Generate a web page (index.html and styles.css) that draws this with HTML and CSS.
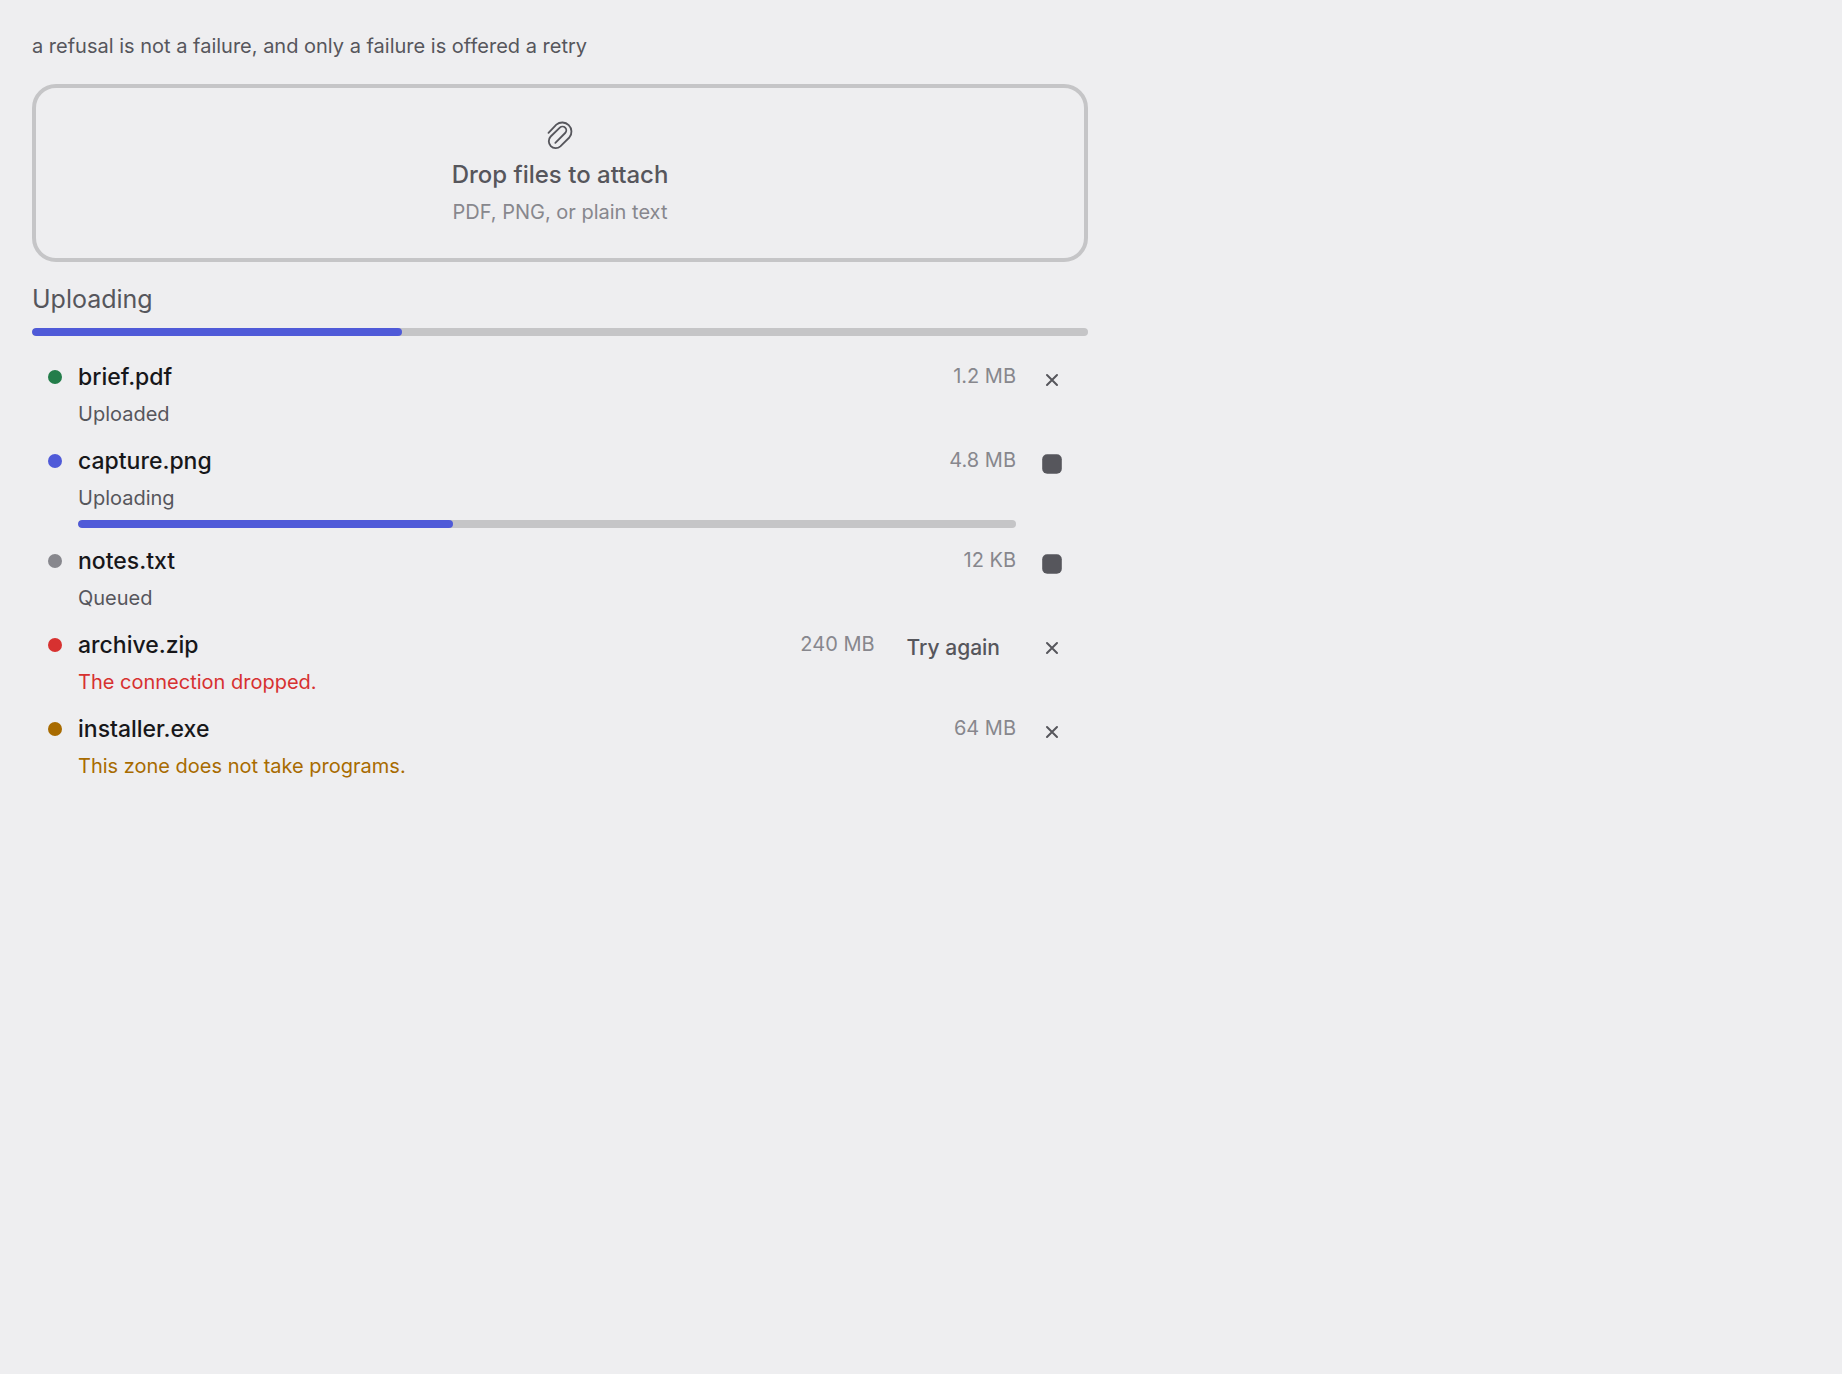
FILE: index.html
```html
<!DOCTYPE html>
<html lang="en">
<head>
<meta charset="utf-8">
<meta name="viewport" content="width=device-width, initial-scale=1">
<title>Attachments</title>
<link rel="stylesheet" href="styles.css">
</head>
<body>
<svg width="0" height="0" class="sprite" aria-hidden="true">
  <symbol id="close" viewBox="0 0 20 20"><path d="M5 5l10 10M15 5l-10 10" fill="none" stroke="currentColor" stroke-width="2" stroke-linecap="round"/></symbol>
  <symbol id="stop" viewBox="0 0 20 20"><rect x=".2" y=".2" width="19.600" height="19.600" rx="5" fill="currentColor"/></symbol>
</svg>
<main class="page">
  <p class="caption">a refusal is not a failure, and only a failure is offered a retry</p>

  <button type="button" class="dropzone">
    <svg class="clip" viewBox="45 30 90 90" aria-hidden="true"><path d="M55.500 68.500L79 44A27.500 27.500 0 0 1 118 82.500L91 109A20.700 20.700 0 0 1 62 79.500L89.500 53A11.300 11.300 0 0 1 105.500 69L76 98.500" fill="none" stroke="currentColor" stroke-width="5.500" stroke-linecap="round" stroke-linejoin="round"/></svg>
    <span class="dropzone-title">Drop files to attach</span>
    <span class="dropzone-hint">PDF, PNG, or plain text</span>
  </button>

  <section class="batch">
    <label class="batch-label" for="total">Uploading</label>
    <progress class="bar" id="total" value="35" max="100"></progress>
  </section>

  <ul class="files">
    <li class="file">
      <span class="dot done"></span>
      <div class="body">
        <div class="name">brief.pdf</div>
        <div class="status">Uploaded</div>
      </div>
      <span class="size">1.2 MB</span>
      <button type="button" class="icon-button" aria-label="Remove brief.pdf"><svg class="icon"><use href="#close"/></svg></button>
    </li>
    <li class="file">
      <span class="dot active"></span>
      <div class="body">
        <div class="line"><span class="name">capture.png</span><span class="size">4.8 MB</span></div>
        <label class="status" for="capture">Uploading</label>
        <progress class="bar" id="capture" value="40" max="100"></progress>
      </div>
      <button type="button" class="icon-button" aria-label="Stop capture.png"><svg class="icon"><use href="#stop"/></svg></button>
    </li>
    <li class="file">
      <span class="dot queued"></span>
      <div class="body">
        <div class="name">notes.txt</div>
        <div class="status">Queued</div>
      </div>
      <span class="size">12 KB</span>
      <button type="button" class="icon-button" aria-label="Stop notes.txt"><svg class="icon"><use href="#stop"/></svg></button>
    </li>
    <li class="file">
      <span class="dot failed"></span>
      <div class="body">
        <div class="name">archive.zip</div>
        <div class="status status-failed">The connection dropped.</div>
      </div>
      <span class="size">240 MB</span>
      <button type="button" class="retry">Try again</button>
      <button type="button" class="icon-button" aria-label="Remove archive.zip"><svg class="icon"><use href="#close"/></svg></button>
    </li>
    <li class="file">
      <span class="dot refused"></span>
      <div class="body">
        <div class="name">installer.exe</div>
        <div class="status status-refused">This zone does not take programs.</div>
      </div>
      <span class="size">64 MB</span>
      <button type="button" class="icon-button" aria-label="Remove installer.exe"><svg class="icon"><use href="#close"/></svg></button>
    </li>
  </ul>
</main>
</body>
</html>
```
FILE: styles.css
```css
:root {
  --bg: #eeeef0;
  --ink: #17171a;
  --text: #56565c;
  --muted: #87878d;
  --line: #c5c5c7;
  --accent: #4f5ad8;
  --green: #237d4a;
  --red: #d73130;
  --amber: #a86b00;
}

* { box-sizing: border-box; }

body {
  margin: 0;
  background: var(--bg);
  color: var(--text);
  font: 20px/32px Inter, "Liberation Sans", sans-serif;
  -webkit-font-smoothing: antialiased;
}

button {
  margin: 0;
  border: 0;
  background: none;
  color: inherit;
  font: inherit;
  cursor: pointer;
}

.sprite { display: block; }

.page {
  display: flex;
  flex-direction: column;
  max-width: 1120px;
  padding: 30px 32px;
}

.caption { margin: 0 0 22px; }

.dropzone {
  display: flex;
  flex-direction: column;
  align-items: center;
  gap: 4px;
  padding: 32px 32px 30px;
  border: 4px solid var(--line);
  border-radius: 24px;
}

.clip {
  width: 30px;
  height: 30px;
  margin-bottom: 4px;
}

.dropzone-title {
  font-size: 24px;
  line-height: 34px;
  font-weight: 500;
}

.dropzone-hint { color: var(--muted); }

.batch {
  display: flex;
  flex-direction: column;
  gap: 8px;
  margin: 16px 0;
}

.batch-label {
  font-size: 25px;
  line-height: 42px;
}

.bar {
  display: block;
  width: 100%;
  height: 8px;
  border: 0;
  border-radius: 4px;
  overflow: hidden;
  background: var(--line);
  appearance: none;
}

.bar::-webkit-progress-bar { background: var(--line); }

.bar::-webkit-progress-value {
  border-radius: 4px;
  background: var(--accent);
}

.files {
  margin: 0;
  padding: 0;
  list-style: none;
}

.file {
  display: flex;
  align-items: flex-start;
  gap: 16px;
  padding: 8px 16px 6px;
}

.dot {
  flex: none;
  width: 14px;
  height: 14px;
  margin-top: 10px;
  border-radius: 50%;
}

.done { background: var(--green); }
.active { background: var(--accent); }
.queued { background: var(--muted); }
.failed { background: var(--red); }
.refused { background: var(--amber); }

.body {
  display: flex;
  flex: 1;
  flex-direction: column;
  gap: 4px;
  min-width: 0;
}

.body .bar {
  margin: 2px 0;
}

.line {
  display: flex;
  justify-content: space-between;
}

.name {
  color: var(--ink);
  font-size: 23px;
  line-height: 34px;
  font-weight: 500;
}

.status-failed { color: var(--red); }
.status-refused { color: var(--amber); }

.size { color: var(--muted); }

.retry {
  height: 40px;
  padding: 0 16px;
  font-size: 21px;
  font-weight: 500;
}

.icon-button {
  display: flex;
  align-items: center;
  justify-content: center;
  width: 40px;
  height: 40px;
  padding: 0;
}

.icon {
  width: 20px;
  height: 20px;
}
```
